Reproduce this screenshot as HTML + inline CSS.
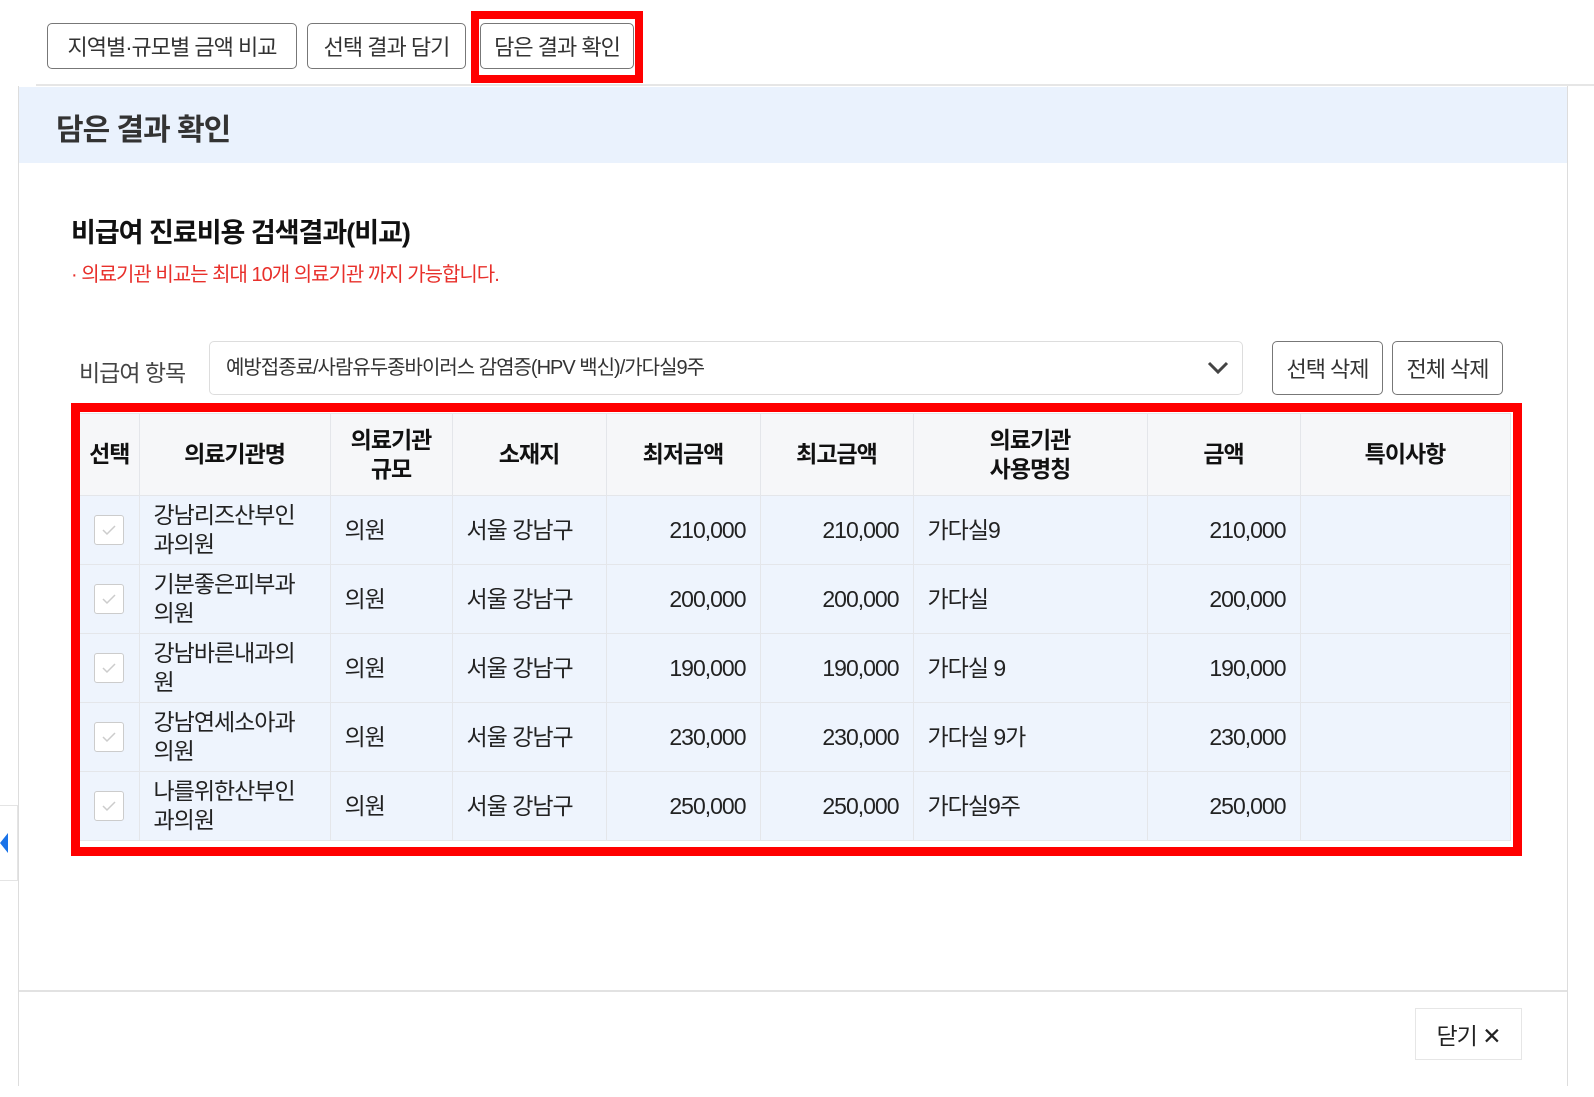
<!DOCTYPE html>
<html><head><meta charset="utf-8"><style>
*{box-sizing:border-box;margin:0;padding:0}
body{width:1594px;height:1097px;background:#fff;position:relative;overflow:hidden;font-family:"Liberation Sans","Noto Sans CJK KR",sans-serif;color:#222;letter-spacing:-1px}
.a{position:absolute}
.btn{position:absolute;border:1.5px solid #777;border-radius:5px;background:#fff;display:flex;align-items:center;justify-content:center;font-size:22px;color:#333}
table{border-collapse:collapse;table-layout:fixed;position:absolute;left:80px;top:413px;width:1430px}
td,th{border:1px solid #e4e6ea;font-size:23px;height:69px;padding:0 14px;line-height:29px}
th{background:#f6f7f9;height:82px;font-weight:700;text-align:center;color:#111}
td{background:#eef4fd;color:#222}
tr td:first-child,tr th:first-child{border-left:none}
td.r{text-align:right}
.cb{width:30px;height:30px;border:1.5px solid #ccc;border-radius:3px;background:#fff;margin:0 auto;display:flex;align-items:center;justify-content:center}
</style></head><body>
<div class="btn" style="left:47px;top:23px;width:250px;height:46px">지역별·규모별 금액 비교</div>
<div class="btn" style="left:307px;top:23px;width:159px;height:46px">선택 결과 담기</div>
<div class="btn" style="left:480px;top:23px;width:154px;height:46px">담은 결과 확인</div>
<div class="a" style="left:471px;top:11px;width:172px;height:72px;border:8px solid #f00"></div>
<div class="a" style="left:36px;top:84px;width:1558px;height:2px;background:#e6e6e6"></div>
<div class="a" style="left:18px;top:86px;width:1550px;height:1000px;border-left:1.5px solid #ddd;border-right:1.5px solid #ddd"></div>
<div class="a" style="left:19px;top:87px;width:1548px;height:76px;background:#eaf2fd"></div>
<div class="a" style="left:56px;top:105px;font-size:30px;font-weight:700;color:#333">담은 결과 확인</div>
<div class="a" style="left:71px;top:211px;font-size:27px;font-weight:700;color:#111">비급여 진료비용 검색결과(비교)</div>
<div class="a" style="left:71px;top:258px;font-size:20px;color:#e8302b">· 의료기관 비교는 최대 10개 의료기관 까지 가능합니다.</div>
<div class="a" style="left:79px;top:354px;font-size:23px;color:#444">비급여 항목</div>
<div class="a" style="left:209px;top:341px;width:1034px;height:54px;border:1px solid #ddd;border-radius:5px;padding-left:16px;font-size:20px;line-height:52px;color:#333">예방접종료/사람유두종바이러스 감염증(HPV 백신)/가다실9주</div>
<svg class="a" style="left:1206px;top:360px" width="24" height="16" viewBox="0 0 24 16"><path d="M3 3 L12 12 L21 3" stroke="#444" stroke-width="3" fill="none"/></svg>
<div class="btn" style="left:1272px;top:341px;width:111px;height:54px">선택 삭제</div>
<div class="btn" style="left:1392px;top:341px;width:111px;height:54px">전체 삭제</div>
<div class="a" style="left:71px;top:403px;width:1451px;height:453px;border:9px solid #f00"></div>
<table>
<colgroup><col style="width:59px"><col style="width:191px"><col style="width:122px"><col style="width:154px"><col style="width:154px"><col style="width:153px"><col style="width:234px"><col style="width:153px"><col style="width:210px"></colgroup>
<tr><th style="padding:0">선택</th><th>의료기관명</th><th>의료기관<br>규모</th><th>소재지</th><th>최저금액</th><th>최고금액</th><th>의료기관<br>사용명칭</th><th>금액</th><th>특이사항</th></tr>
<tr><td><div class="cb"><svg width="16" height="12"><path d="M2 6 L6 10 L14 2" stroke="#ccc" stroke-width="1.5" fill="none"/></svg></div></td><td>강남리즈산부인<br>과의원</td><td>의원</td><td>서울 강남구</td><td class="r">210,000</td><td class="r">210,000</td><td>가다실9</td><td class="r">210,000</td><td></td></tr>
<tr><td><div class="cb"><svg width="16" height="12"><path d="M2 6 L6 10 L14 2" stroke="#ccc" stroke-width="1.5" fill="none"/></svg></div></td><td>기분좋은피부과<br>의원</td><td>의원</td><td>서울 강남구</td><td class="r">200,000</td><td class="r">200,000</td><td>가다실</td><td class="r">200,000</td><td></td></tr>
<tr><td><div class="cb"><svg width="16" height="12"><path d="M2 6 L6 10 L14 2" stroke="#ccc" stroke-width="1.5" fill="none"/></svg></div></td><td>강남바른내과의<br>원</td><td>의원</td><td>서울 강남구</td><td class="r">190,000</td><td class="r">190,000</td><td>가다실 9</td><td class="r">190,000</td><td></td></tr>
<tr><td><div class="cb"><svg width="16" height="12"><path d="M2 6 L6 10 L14 2" stroke="#ccc" stroke-width="1.5" fill="none"/></svg></div></td><td>강남연세소아과<br>의원</td><td>의원</td><td>서울 강남구</td><td class="r">230,000</td><td class="r">230,000</td><td>가다실 9가</td><td class="r">230,000</td><td></td></tr>
<tr><td><div class="cb"><svg width="16" height="12"><path d="M2 6 L6 10 L14 2" stroke="#ccc" stroke-width="1.5" fill="none"/></svg></div></td><td>나를위한산부인<br>과의원</td><td>의원</td><td>서울 강남구</td><td class="r">250,000</td><td class="r">250,000</td><td>가다실9주</td><td class="r">250,000</td><td></td></tr>
</table>
<div class="a" style="left:0;top:805px;width:18px;height:76px;border:1px solid #e4e4e4;border-left:none;background:#fff"></div>
<svg class="a" style="left:0;top:833px" width="10" height="20"><path d="M8 0 L0 10 L8 20 Z" fill="#1a73e8"/></svg>
<div class="a" style="left:19px;top:990px;width:1548px;height:2px;background:#e2e2e2"></div>
<div class="a" style="left:1415px;top:1008px;width:107px;height:52px;border:1px solid #e6e6e6;font-size:23px;display:flex;align-items:center;justify-content:center;color:#222">닫기 ✕</div>
</body></html>
